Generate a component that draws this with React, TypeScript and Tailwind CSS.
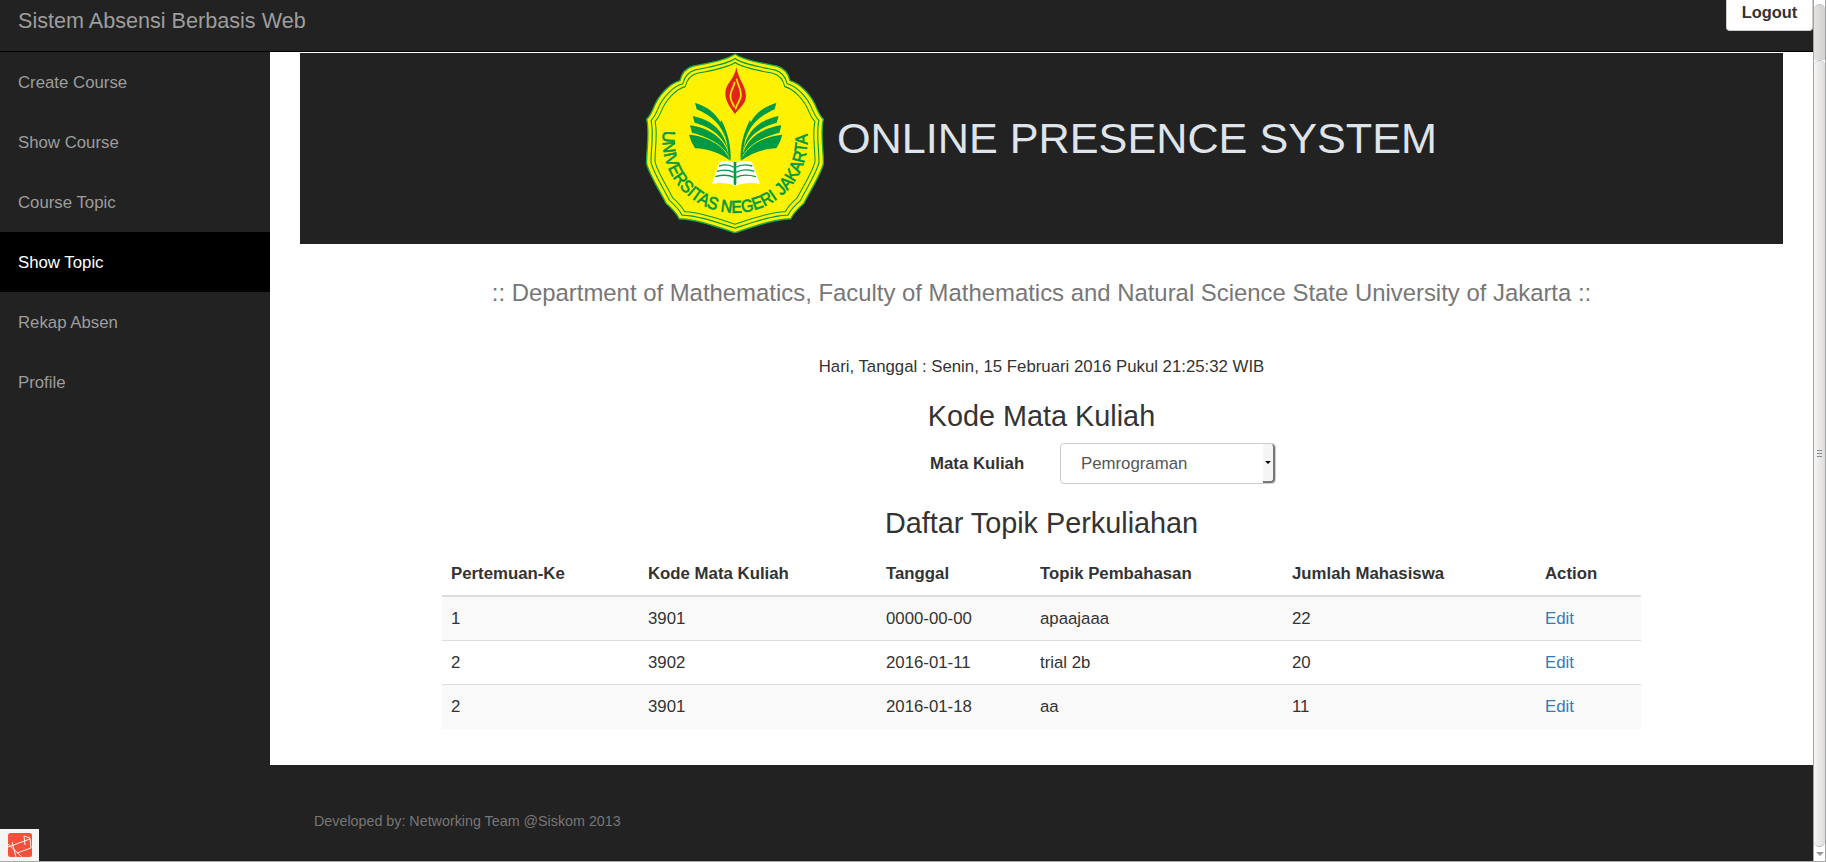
import React from "react";

const menuItems = ["Create Course", "Show Course", "Course Topic", "Show Topic", "Rekap Absen", "Profile"];

const topics = [
  { meet: "1", code: "3901", date: "0000-00-00", topic: "apaajaaa", total: "22" },
  { meet: "2", code: "3902", date: "2016-01-11", topic: "trial 2b", total: "20" },
  { meet: "2", code: "3901", date: "2016-01-18", topic: "aa", total: "11" },
];

const sealPath =
  "M345 42 C370 60 420 68 470 78 C492 84 505 100 510 122 C540 130 575 165 590 205 C596 220 604 232 610 238 " +
  "C600 280 612 340 610 372 C600 410 560 470 552 490 C535 505 520 520 512 537 C470 535 400 560 345 578 " +
  "C290 560 220 535 178 537 C170 520 155 505 138 490 C130 470 90 410 80 372 C78 340 90 280 80 238 " +
  "C86 232 94 220 100 205 C115 165 150 130 180 122 C185 100 198 84 220 78 C270 68 320 60 345 42 Z";

const ringAt = (s: number) => `translate(345 310) scale(${s}) translate(-345 -310)`;

const frondPaths = [
  "M225 188 C268 203 306 225 318 300 C302 245 265 224 230 208 Z",
  "M218 228 C265 238 310 262 324 330 C304 280 265 260 224 248 Z",
  "M210 256 C262 263 314 290 328 350 C304 308 260 290 216 278 Z",
  "M207 284 C258 288 314 315 331 362 C302 340 262 326 225 325 Q212 305 207 284 Z",
  "M304 240 C324 278 334 320 332 362 L326 350 C322 305 314 275 300 248 Z",
];

const UnjLogo = () => (
  <svg viewBox="72 39 546 546" className="h-[182px] w-[182px] shrink-0">
    <path d={sealPath} fill="#fff200" stroke="#1fa64a" strokeWidth="4" />
    <path d={sealPath} fill="none" stroke="#009a44" strokeWidth="3.5" transform={ringAt(0.95)} />
    <path d={sealPath} fill="none" stroke="#009a44" strokeWidth="3.5" transform={ringAt(0.905)} />
    <path d="M349 82 C356 120 378 140 378 168 C378 192 356 205 345 222 C334 205 315 185 316 158 C318 128 344 118 349 82 Z" fill="#e2231a" />
    <g stroke="#fff200" strokeWidth="5" fill="none" strokeLinecap="round">
      <path d="M350 118 C356 142 366 152 362 172 C358 186 350 192 347 206" />
      <path d="M344 128 C340 146 328 156 332 176 C335 188 340 192 342 200" />
    </g>
    {frondPaths.map((d) => (
      <g key={d} fill="#009a44">
        <path d={d} />
        <path d={d} transform="translate(694 0) scale(-1 1)" />
      </g>
    ))}
    <path d="M298 366 C315 362 335 362 345 370 C355 362 378 362 396 366 L420 432 C395 426 365 428 345 438 C325 428 298 426 276 432 Z" fill="#fff" />
    <g stroke="#009a44" strokeWidth="4" fill="none">
      <path d="M297 378 C315 373 332 375 341 382 M349 382 C358 375 378 373 397 378" />
      <path d="M291 394 C312 388 330 390 341 397 M349 397 C360 390 382 388 403 394" />
      <path d="M286 410 C308 404 328 405 341 412 M349 412 C362 405 386 404 408 410" />
    </g>
    <path d="M341 366 h8 v66 q-4 8 -8 0 Z" fill="#009a44" />
    <defs>
      <path id="sealText" d="M130 272 A 217 217 0 1 0 560 272" />
    </defs>
    <text fontFamily="'Liberation Sans', Arial, sans-serif" fontSize="52" fill="#009a44" stroke="#009a44" strokeWidth="2">
      <textPath href="#sealText" textLength="730" lengthAdjust="spacingAndGlyphs">
        UNIVERSITAS NEGERI JAKARTA
      </textPath>
    </text>
  </svg>
);

const LaravelBadge = () => (
  <div className="flex h-[32px] w-[39px] items-center justify-center bg-[#f5f5f5]">
    <svg viewBox="0 0 24 24" className="h-[24px] w-[24px]">
      <rect width="24" height="24" rx="2.5" fill="#f4513b" />
      <g stroke="#ffffff" strokeWidth="0.9" fill="none">
        <path d="M0 11 L14 24" />
        <path d="M0 14 L22 6" />
        <path d="M4 9 L8 24" />
        <path d="M16 3 L22 5 L23 15 L9 20" />
        <path d="M16 3 L17 12" />
      </g>
    </svg>
  </div>
);

const Scrollbar = () => (
  <div className="flex h-full w-[13px] shrink-0 flex-col border-x border-[#a3a3a3] bg-white">
    <div className="mt-[4px] h-[56px] rounded-t-full border-t border-[#bdbdbd] bg-gradient-to-r from-[#e4e3e1] to-[#d3d1cf]" />
    <div className="flex flex-1 flex-col items-center justify-center gap-[2px] rounded-full border-y border-[#bdbdbd] bg-gradient-to-r from-[#f7f6f5] to-[#dedcda]">
      <span className="h-px w-[5px] bg-[#8a8a8a]" />
      <span className="h-px w-[5px] bg-[#8a8a8a]" />
      <span className="h-px w-[5px] bg-[#8a8a8a]" />
    </div>
    <div className="flex h-[14px] items-center justify-center">
      <span className="h-0 w-0 border-x-[4px] border-t-[4px] border-x-transparent border-t-[#9a9a9a]" />
    </div>
  </div>
);

export default function App() {
  return (
    <div className="flex h-[862px] w-full flex-col overflow-hidden bg-[#222222] font-['Liberation_Sans',Arial,sans-serif] text-[16.8px] leading-[24px] text-[#333333]">
      <div className="flex min-h-0 flex-1">
        <div className="flex min-w-0 flex-1 flex-col">
          <header className="flex h-[52px] shrink-0 items-start justify-between border-b border-black">
            <a className="pl-[18px] pt-[7px] text-[21.6px] leading-[28px] text-[#9d9d9d]">Sistem Absensi Berbasis Web</a>
            <button className="h-[31px] w-[87px] rounded-b-[4px] border border-t-0 border-[#cccccc] bg-white pb-[9px] text-[16.4px] font-bold text-[#333333]">
              Logout
            </button>
          </header>

          <div className="flex min-h-0">
            <nav className="w-[270px] shrink-0">
              {menuItems.map((item) => (
                <a
                  key={item}
                  className={
                    item === "Show Topic"
                      ? "flex h-[60px] items-center bg-black pl-[18px] pt-[2px] text-white"
                      : "flex h-[60px] items-center pl-[18px] pt-[2px] text-[#9d9d9d]"
                  }
                >
                  {item}
                </a>
              ))}
            </nav>

            <main className="h-[713px] min-w-0 flex-1 bg-white pt-px">
              <div className="mx-[30px] flex h-[191px] items-start justify-center bg-[#222222]">
                <div className="mr-[2px] flex items-center">
                  <UnjLogo />
                  <h1 className="mb-[10px] ml-[11px] text-[43.2px] leading-none text-[#dfe3ea]">ONLINE PRESENCE SYSTEM</h1>
                </div>
              </div>

              <p className="mt-[32px] text-center text-[23.9px] leading-[34px] text-[#777777]">
                :: Department of Mathematics, Faculty of Mathematics and Natural Science State University of Jakarta ::
              </p>

              <p className="mt-[45px] text-center">Hari, Tanggal : Senin, 15 Februari 2016 Pukul 21:25:32 WIB</p>

              <h2 className="mt-[21px] text-center text-[28.8px] leading-[33px]">Kode Mata Kuliah</h2>

              <div className="ml-[123px] mt-[10px] flex items-center justify-center">
                <label className="w-[130px] font-bold">Mata Kuliah</label>
                <div className="relative flex h-[41px] w-[216px] items-center rounded-[4px] border border-[#cccccc] pl-[20px] text-[#555555]">
                  Pemrograman
                  <span className="absolute inset-y-0 right-0 flex w-[12px] items-center justify-center rounded-r-[4px] border-b-2 border-r-2 border-[#777777] bg-[#f5f5f5]">
                    <span className="h-0 w-0 border-x-[3px] border-t-[3px] border-x-transparent border-t-black" />
                  </span>
                </div>
              </div>

              <h2 className="mt-[23px] text-center text-[28.8px] leading-[33px]">Daftar Topik Perkuliahan</h2>

              <table className="mx-auto mt-[12px] w-[1199px] table-fixed border-collapse text-left">
                <thead>
                  <tr className="border-b-2 border-[#dddddd]">
                    <th className="w-[197px] px-[9px] py-[9.6px] font-bold">Pertemuan-Ke</th>
                    <th className="w-[238px] px-[9px] py-[9.6px] font-bold">Kode Mata Kuliah</th>
                    <th className="w-[154px] px-[9px] py-[9.6px] font-bold">Tanggal</th>
                    <th className="w-[252px] px-[9px] py-[9.6px] font-bold">Topik Pembahasan</th>
                    <th className="w-[253px] px-[9px] py-[9.6px] font-bold">Jumlah Mahasiswa</th>
                    <th className="px-[9px] py-[9.6px] font-bold">Action</th>
                  </tr>
                </thead>
                <tbody>
                  {topics.map((row, i) => (
                    <tr key={i} className={i % 2 === 0 ? "h-[44.4px] border-t border-[#dddddd] bg-[#f9f9f9]" : "h-[44.4px] border-t border-[#dddddd]"}>
                      <td className="px-[9px]">{row.meet}</td>
                      <td className="px-[9px]">{row.code}</td>
                      <td className="px-[9px]">{row.date}</td>
                      <td className="px-[9px]">{row.topic}</td>
                      <td className="px-[9px]">{row.total}</td>
                      <td className="px-[9px] text-[#337ab7]">Edit</td>
                    </tr>
                  ))}
                </tbody>
              </table>
            </main>
          </div>

          <footer className="relative flex-1 pl-[314px] pt-[46px] text-[14.3px] leading-[20px] text-[#777777]">
            Developed by: Networking Team @Siskom 2013
            <div className="absolute bottom-0 left-0">
              <LaravelBadge />
            </div>
          </footer>
        </div>
        <Scrollbar />
      </div>
      <div className="h-px shrink-0 bg-[#a9a9a9]" />
    </div>
  );
}
